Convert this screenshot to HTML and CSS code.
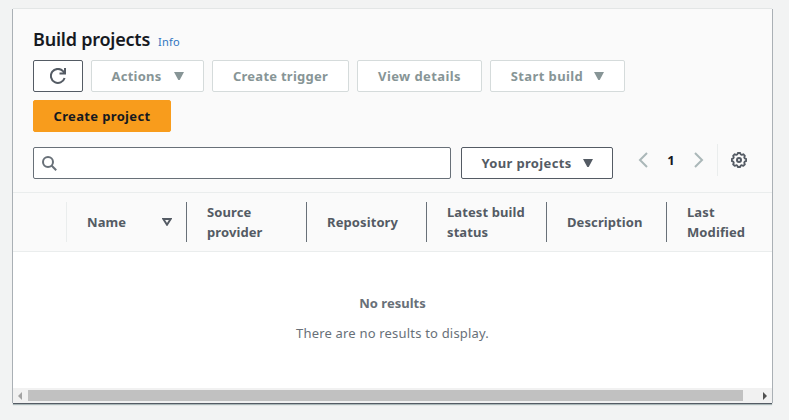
FILE: index.html
```html
<!DOCTYPE html>
<html lang="en">
<head>
<meta charset="utf-8">
<title>Build projects</title>
<link rel="stylesheet" href="styles.css">
</head>
<body>
<main class="panel">
  <header class="panel-header">
    <div class="heading"><h1>Build projects</h1><a class="info">Info</a></div>
    <div class="actions">
      <button class="btn refresh" aria-label="Refresh"><svg width="16" height="16" viewBox="0 0 16 16"><path d="M14.6 10A7 7 0 1 1 13 3.1L15 5.2M15 0v5.5H9.5" fill="none" stroke="currentColor" stroke-width="2"/></svg></button>
      <button class="btn disabled w-actions"><span>Actions</span><svg class="caret" width="10" height="8" viewBox="0 0 10 8"><path d="M0 0h10L5.7 8H4.3z"/></svg></button>
      <button class="btn disabled w-trigger"><span>Create trigger</span></button>
      <button class="btn disabled w-view"><span>View details</span></button>
      <button class="btn disabled w-start"><span>Start build</span><svg class="caret" width="10" height="8" viewBox="0 0 10 8"><path d="M0 0h10L5.7 8H4.3z"/></svg></button>
      <button class="btn primary"><span>Create project</span></button>
    </div>
    <div class="filters">
      <div class="search"><svg width="16" height="16" viewBox="0 0 16 16"><circle cx="6" cy="6" r="5" fill="none" stroke="currentColor" stroke-width="2"/><path d="M9.5 9.5l4.7 4.7" stroke="currentColor" stroke-width="2"/></svg></div>
      <button class="btn w-yours"><span>Your projects</span><svg class="caret" width="10" height="8" viewBox="0 0 10 8"><path d="M0 0h10L5.7 8H4.3z"/></svg></button>
      <nav class="pager">
        <svg width="10" height="16" viewBox="0 0 10 16"><path d="M9 1L2 8l7 7" fill="none" stroke="currentColor" stroke-width="2"/></svg>
        <b>1</b>
        <svg width="10" height="16" viewBox="0 0 10 16"><path d="M1 1l7 7-7 7" fill="none" stroke="currentColor" stroke-width="2"/></svg>
      </nav>
      <div class="settings"><svg width="16" height="16" viewBox="0 0 16 16" fill="none" stroke="currentColor"><path d="M6.8 1h2.4l.5 1.5 1.1.4 1.5-.7 1.6 1.6-.7 1.4.5 1.2 1.4.5v2.3l-1.4.5-.5 1.2.7 1.4-1.6 1.6-1.5-.7-1.1.4L9.2 15H6.8l-.5-1.4-1.1-.4-1.5.7-1.6-1.6.7-1.4-.5-1.2L.9 9.2V6.9l1.4-.5.5-1.2-.7-1.4 1.6-1.6 1.5.7 1.1-.4z" stroke-width="1.8" stroke-linejoin="round"/><circle cx="8" cy="8" r="2" stroke-width="2"/></svg></div>
    </div>
  </header>
  <div class="columns">
    <div class="select-cell"></div>
    <div class="cell name"><span>Name</span><svg width="10" height="8" viewBox="0 0 10 8"><path d="M1.3 1h7.4L5 6.7z" fill="none" stroke="currentColor" stroke-width="2"/></svg></div>
    <div class="cell">Source<br>provider</div>
    <div class="cell">Repository</div>
    <div class="cell">Latest build<br>status</div>
    <div class="cell">Description</div>
    <div class="cell last">Last<br>Modified</div>
  </div>
  <section class="empty"><b>No results</b><p>There are no results to display.</p></section>
  <div class="scrollbar">
    <svg class="arrow-left" width="4" height="8" viewBox="0 0 4 8"><path d="M4 0v8L0 4z"/></svg>
    <div class="thumb"></div>
    <svg class="arrow-right" width="4" height="8" viewBox="0 0 4 8"><path d="M0 0v8l4-4z"/></svg>
  </div>
</main>
</body>
</html>
```
FILE: styles.css
```css
* { box-sizing: border-box; }
body {
  margin: 0;
  height: 420px;
  overflow: hidden;
  background: #f2f3f3;
  color: #545b64;
  font: 13px/20px "Noto Sans", "Open Sans", sans-serif;
}
.panel {
  width: 759px;
  height: 394px;
  margin: 9px 0 0 13px;
  display: flex;
  flex-direction: column;
  background: #fff;
  box-shadow: 0 1px 0 #545b64, -1px 0 0 #aab0b5, 1px 0 0 #aab0b5, 0 -1px 0 #e3e6e6, 0 2px 1px #aab7b8;
}
.panel-header {
  height: 184px;
  padding: 19px 20px 0;
  background: #fafafa;
  border-bottom: 1px solid #eaeded;
}
.heading { display: flex; align-items: baseline; height: 32px; line-height: 22px; }
h1 { margin: 0; width: 125px; color: #16191f; font-size: 18px; line-height: 22px; font-weight: 600; letter-spacing: -0.22px; white-space: nowrap; }
.info { color: #2f74c0; font-size: 11px; letter-spacing: 0.25px; }
.actions { display: flex; flex-wrap: wrap; gap: 8px; }
.btn {
  height: 32px;
  padding: 0;
  display: flex;
  align-items: center;
  justify-content: center;
  border: 1px solid #545b64;
  border-radius: 2px;
  background: #fff;
  color: #545b64;
  font: 700 13px/20px "Noto Sans", "Open Sans", sans-serif;
  letter-spacing: 0.25px;
  white-space: nowrap;
}
.disabled { color: #879596; border-color: #d5dbdb; }
.refresh { width: 50px; }
.w-actions { width: 113px; }
.w-trigger { width: 137px; }
.w-view { width: 125px; letter-spacing: 0.4px; }
.w-start { width: 135px; letter-spacing: 0.4px; }
.w-yours { width: 152px; margin-left: 10px; letter-spacing: 0.35px; }
.primary { width: 138px; color: #16191f; background: #f89c1c; border-color: #f89c1c; letter-spacing: 0.35px; }
.caret { margin-left: 11px; fill: currentColor; }
.w-actions .caret { margin-left: 12px; }
.filters { display: flex; margin-top: 15px; }
.search { width: 418px; height: 32px; padding: 8px; border: 1px solid #687078; border-radius: 2px; background: #fff; color: #687078; }
.search svg, .pager svg, .settings svg { display: block; }
.pager { width: 66px; margin-left: 25px; height: 26px; display: flex; align-items: center; justify-content: space-between; color: #aab7b8; }
.pager b { color: #16191f; font-size: 13px; }
.settings { margin: -3px 0 0 13px; height: 32px; padding: 8px 0 0 13px; border-left: 1px solid #eaeded; }
.columns { display: flex; align-items: center; height: 59px; background: #fafafa; border-bottom: 1px solid #eaeded; }
.select-cell { width: 54px; height: 40px; border-right: 1px solid #eaeded; }
.cell { width: 120px; height: 40px; padding-left: 20px; display: flex; align-items: center; border-right: 1px solid #687078; font-weight: 700; white-space: nowrap; letter-spacing: 0.1px; }
.name { justify-content: space-between; padding-right: 14px; }
.last { width: 105px; border: 0; }
.empty { flex: 1; padding-top: 41px; text-align: center; color: #687078; }
.empty b { display: block; font-weight: 700; }
.empty p { margin: 10px 0 0; letter-spacing: 0.19px; }
.scrollbar { height: 15px; display: flex; align-items: center; padding: 0 5px; background: #f1f1f1; }
.thumb { width: 715px; height: 11px; margin-left: 6px; background: #c1c1c1; }
.arrow-left { fill: #a3a3a3; }
.arrow-right { margin-left: auto; fill: #505050; }
```
